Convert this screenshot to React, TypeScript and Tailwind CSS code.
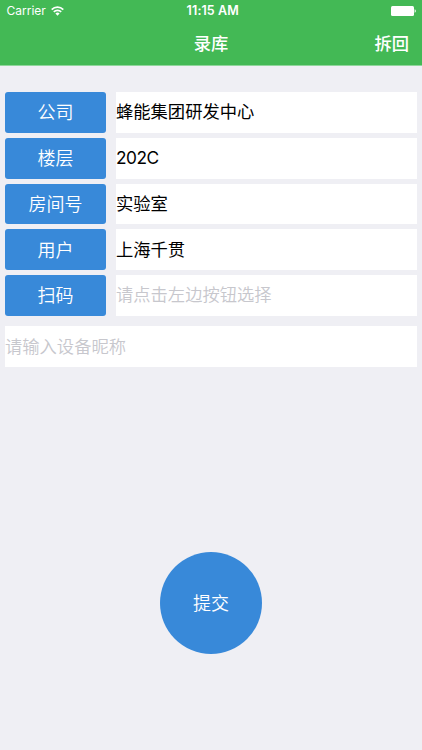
import React from "react";

interface FieldRow {
  label: string;
  value: string;
  placeholder?: string;
  tight?: boolean;
}

const rows: FieldRow[] = [
  { label: "公司", value: "蜂能集团研发中心" },
  { label: "楼层", value: "202C", tight: true },
  { label: "房间号", value: "实验室" },
  { label: "用户", value: "上海千贯" },
  { label: "扫码", value: "", placeholder: "请点击左边按钮选择" },
];

const StatusBar: React.FC = () => (
  <div className="grid h-[22px] grid-cols-[1fr_auto_1fr] items-center pr-[6px] pl-[6.5px] text-[12px] text-white">
    <div className="flex items-center gap-[5px]">
      <span>Carrier</span>
      <svg width="13" height="10" viewBox="0 0 13 10" fill="none" stroke="currentColor" strokeWidth="1.7">
        <path d="M0.7 3.6a8.2 8.2 0 0 1 11.6 0" />
        <path d="M2.8 5.9a5.2 5.2 0 0 1 7.4 0" />
        <path d="M6.5 9.7 4.4 7.5a2.9 2.9 0 0 1 4.2 0z" fill="currentColor" stroke="none" />
      </svg>
    </div>
    <span className="pt-px pl-[3px] text-center text-[12.5px] font-semibold tracking-[0.1px]">11:15 AM</span>
    <svg className="justify-self-end" width="25" height="10" viewBox="0 0 25 10" fill="none">
      <rect width="23" height="10" rx="1.5" fill="currentColor" />
      <path d="M23.6 3.3c1.6.5 1.6 2.9 0 3.4z" fill="currentColor" />
    </svg>
  </div>
);

const App: React.FC = () => {
  return (
    <div className="flex h-[750px] w-[422px] flex-col bg-[#efeff4] font-[Inter,'Noto_Sans_CJK_SC',sans-serif]">
      <header className="h-[66px] border-b border-[#8fd69b] bg-[#43b955] text-white">
        <StatusBar />
        <div className="grid h-[43px] grid-cols-3 items-center px-[13px]">
          <h1 className="col-start-2 text-center text-[17.3px] font-medium">录库</h1>
          <button className="justify-self-end text-[17.3px] font-medium">拆回</button>
        </div>
      </header>

      <main className="flex flex-1 flex-col px-[5px] pt-[26px]">
        <div className="flex flex-col gap-[5px]">
          {rows.map((row) => (
            <div key={row.label} className="flex h-[40.75px] gap-[10px]">
              <button className="w-[101px] rounded-[3px] bg-[#3889d9] pt-px text-[18px] font-[350] text-white">
                {row.label}
              </button>
              <input
                className={`min-w-0 flex-1 bg-white text-[17.3px] text-black placeholder:font-[350] placeholder:text-[#c7c7cd] ${
                  row.tight ? "pb-px tracking-[-0.5px]" : ""
                }`}
                defaultValue={row.value}
                placeholder={row.placeholder}
              />
            </div>
          ))}
        </div>
        <input
          className="mt-[10px] h-[41px] w-full bg-white text-[17.3px] placeholder:font-[350] placeholder:text-[#c7c7cd]"
          placeholder="请输入设备昵称"
        />
        <button className="mt-[185px] size-[102px] self-center rounded-full bg-[#3889d9] pt-px text-[18px] font-[350] text-white">
          提交
        </button>
      </main>
    </div>
  );
};

export default App;
